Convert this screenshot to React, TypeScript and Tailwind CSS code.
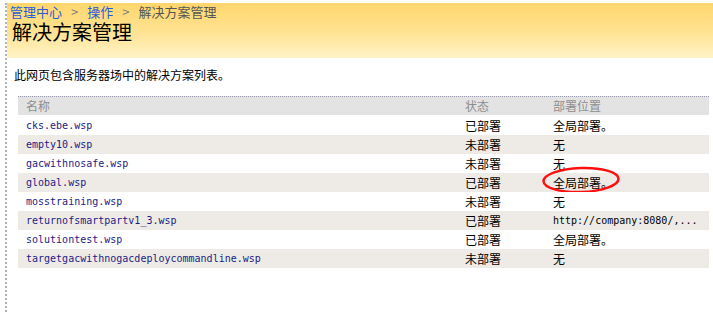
import React from "react";

// ── Data ──────────────────────────────────────────────────────────────────────

interface Solution {
  name: string;
  status: string;
  location: string;
  mono?: boolean;
  circled?: boolean;
}

const SOLUTIONS: Solution[] = [
  { name: "cks.ebe.wsp", status: "已部署", location: "全局部署。" },
  { name: "empty10.wsp", status: "未部署", location: "无" },
  { name: "gacwithnosafe.wsp", status: "未部署", location: "无" },
  { name: "global.wsp", status: "已部署", location: "全局部署。", circled: true },
  { name: "mosstraining.wsp", status: "未部署", location: "无" },
  { name: "returnofsmartpartv1_3.wsp", status: "已部署", location: "http://company:8080/,...", mono: true },
  { name: "solutiontest.wsp", status: "已部署", location: "全局部署。" },
  { name: "targetgacwithnogacdeploycommandline.wsp", status: "未部署", location: "无" },
];

const CJK = "font-['Noto_Sans_CJK_SC','Noto_Sans',sans-serif]";
const MONO = "font-['DejaVu_Sans_Mono','Liberation_Mono',monospace]";

// ── Main component ────────────────────────────────────────────────────────────

export default function App() {
  return (
    <div className={`w-[713px] h-[312px] bg-white pt-[3px] pl-[5px] overflow-hidden ${CJK}`}>
      <div className="h-full border-l-2 border-dotted border-[#b4b4b4]">
        {/* Yellow title band */}
        <div className="h-[55px] pl-[3px] bg-gradient-to-b from-[#ffd66c] via-[#ffe28f] to-[#fff3c6]">
          <div className="flex items-center gap-[9px] h-[18px] text-[13px] leading-[18px]">
            <span className="text-[#2a5bd6]">管理中心</span>
            <span className="text-[#808080]">&gt;</span>
            <span className="text-[#2a5bd6]">操作</span>
            <span className="text-[#808080]">&gt;</span>
            <span className="text-[#555555]">解决方案管理</span>
          </div>
          <h1 className="ml-[2px] text-[20px] leading-[22px] text-black">解决方案管理</h1>
        </div>

        {/* Description */}
        <p className="mt-[9px] ml-[7px] text-[12px] leading-[16px] text-black">此网页包含服务器场中的解决方案列表。</p>

        {/* Table */}
        <div className="mt-[13px] ml-[11px] w-[691px]">
          <div className="grid grid-cols-[447px_88px_1fr] h-[19px] items-center border-t border-dotted border-[#9a9aae] bg-[#e3e3e3] text-[12px] leading-[14px] text-[#8e8e8e]">
            <span className="pl-[8px]">名称</span>
            <span>状态</span>
            <span>部署位置</span>
          </div>
          <div className="mt-[1px]">
            {SOLUTIONS.map((s, i) => (
              <div
                key={s.name}
                className={[
                  "relative grid grid-cols-[447px_88px_1fr] h-[19px] items-center",
                  i % 2 === 1 ? "bg-[#eeebe6]" : "bg-white",
                ].join(" ")}
              >
                <span className={`pl-[8px] text-[10px] leading-[12px] text-[#1c1c86] ${MONO}`}>{s.name}</span>
                <span className="text-[12px] leading-[14px] text-black">{s.status}</span>
                <span
                  className={
                    s.mono
                      ? `text-[10px] leading-[12px] text-black ${MONO}`
                      : "text-[12px] leading-[14px] text-black"
                  }
                >
                  {s.location}
                </span>
                {s.circled && (
                  <svg
                    className="absolute left-[523px] top-[-7px] w-[80px] h-[29px]"
                    viewBox="0 0 80 29"
                    fill="none"
                  >
                    <ellipse cx="40" cy="14" rx="37.5" ry="12" stroke="#ff1010" strokeWidth="2.5" transform="rotate(-2 40 14)" />
                  </svg>
                )}
              </div>
            ))}
          </div>
        </div>
      </div>
    </div>
  );
}
